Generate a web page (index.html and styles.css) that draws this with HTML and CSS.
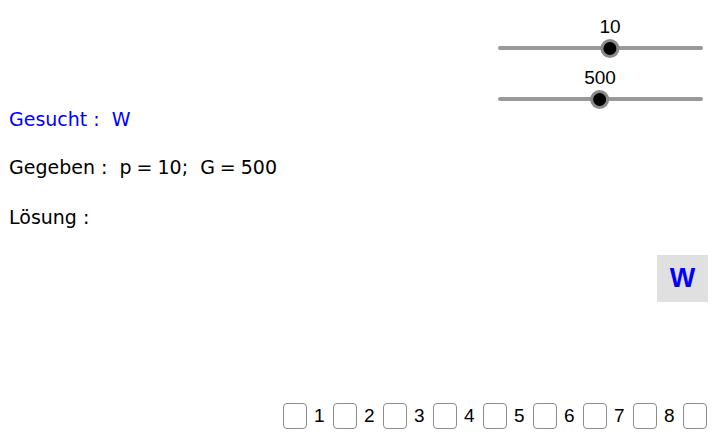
FILE: index.html
```html
<!DOCTYPE html>
<html lang="de">
<head>
    <meta charset="UTF-8">
    <meta name="viewport" content="width=device-width, initial-scale=1.0">
    <title>Prozentrechnung</title>
    <link rel="stylesheet" href="styles.css">
</head>
<body>

    <div class="sliders">
        <div class="slider">
            <div class="track"></div>
            <div class="thumb" style="left: 112px;">
                <span class="value">10</span>
                <span class="knob"></span>
            </div>
        </div>
        <div class="slider">
            <div class="track"></div>
            <div class="thumb" style="left: 102px;">
                <span class="value">500</span>
                <span class="knob"></span>
            </div>
        </div>
    </div>

    <div class="task">
        <p class="wanted">Gesucht :&nbsp; W</p>
        <p>Gegeben :&nbsp; p<span class="eq">=</span>10;&nbsp; G<span class="eq">=</span>500</p>
        <p>Lösung :</p>
    </div>

    <div class="answer">
        <button class="answer-btn">W</button>
    </div>

    <div class="steps">
        <label class="step"><span class="box"></span>1</label>
        <label class="step"><span class="box"></span>2</label>
        <label class="step"><span class="box"></span>3</label>
        <label class="step"><span class="box"></span>4</label>
        <label class="step"><span class="box"></span>5</label>
        <label class="step"><span class="box"></span>6</label>
        <label class="step"><span class="box"></span>7</label>
        <label class="step"><span class="box"></span>8</label>
        <label class="step"><span class="box"></span></label>
    </div>

</body>
</html>
```

FILE: styles.css
```css
body {
    font-family: 'Liberation Sans', Arial, sans-serif;
    background-color: #fff;
    color: #000;
    margin: 0;
    padding: 0;
    width: 715px;
    height: 435px;
    overflow: hidden;
}

/* sliders, top right */
.sliders {
    display: flex;
    flex-direction: column;
    align-items: flex-end;
    padding: 17px 12px 0 0;
    gap: 11px;
}
.slider {
    position: relative;
    width: 205px;
    height: 40px;
}
.track {
    position: absolute;
    left: 0;
    right: 0;
    bottom: 7px;
    height: 4px;
    border-radius: 2px;
    background-color: #999;
}
.thumb {
    position: absolute;
    top: 0;
    transform: translateX(-50%);
    display: flex;
    flex-direction: column;
    align-items: center;
    gap: 2px;
}
.value {
    font-size: 19px;
    line-height: 20px;
}
.knob {
    width: 13px;
    height: 13px;
    border-radius: 50%;
    background-color: #000;
    border: 3px solid #8a8a8a;
    box-sizing: content-box;
}

/* task text */
.task {
    padding: 0 0 0 9px;
    margin-top: -1px;
    font-family: 'DejaVu Sans', sans-serif;
}
.task p {
    font-size: 19px;
    line-height: 24px;
    margin: 0 0 26px 0;
}
.task p.wanted {
    color: #0000ff;
    margin-bottom: 24px;
}
.eq {
    margin: 0 5px;
}

/* answer button */
.answer {
    display: flex;
    justify-content: flex-end;
    padding-right: 7px;
    margin-top: 12px;
}
.answer-btn {
    width: 51px;
    height: 47px;
    border: none;
    background-color: #e0e0e0;
    color: #0000ff;
    font-family: 'Liberation Sans', Arial, sans-serif;
    font-weight: bold;
    font-size: 27px;
    padding: 0;
}

/* step checkboxes */
.steps {
    display: flex;
    justify-content: flex-end;
    padding-right: 8px;
    margin-top: 101px;
}
.step {
    display: flex;
    align-items: center;
    width: 50px;
    font-size: 19px;
    gap: 7px;
}
.step:last-child {
    width: 24px;
}
.box {
    width: 22px;
    height: 24px;
    border: 1px solid #8c8c8c;
    border-radius: 4px;
    background-color: #fff;
}
```
